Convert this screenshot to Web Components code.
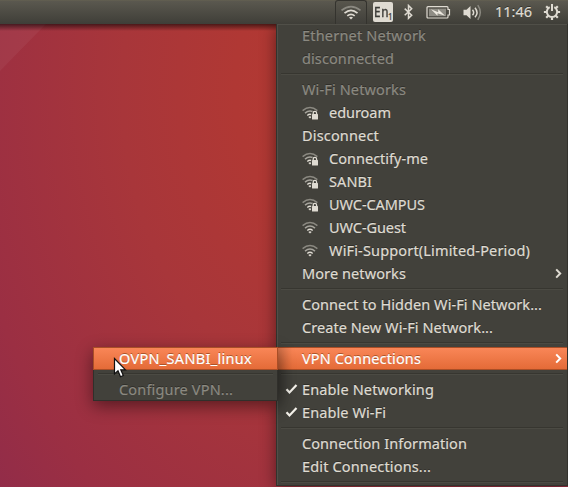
<!DOCTYPE html>
<html lang="en"><head><meta charset="utf-8"><title>Network menu</title>
<style>html,body{margin:0;height:100%;overflow:hidden}</style></head><body>
<desktop-screen></desktop-screen>
<script>
const make=(name,html,setup)=>customElements.define(name,class extends HTMLElement{
  connectedCallback(){
    if(this.shadowRoot)return;
    const t=document.createElement('template');t.innerHTML=html;
    this.attachShadow({mode:'open'}).append(t.content.cloneNode(true));
    if(setup)setup.call(this);
  }
});

/* Text label whose tracking is adjusted to reach a given advance width. */
make('fit-label',`<style>:host{display:inline-block;white-space:pre;-webkit-text-stroke:.2px currentColor}span{display:inline-block}</style><span><slot></slot></span>`,function(){
  const s=this.shadowRoot.querySelector('span'),w=+this.getAttribute('w');
  const n=this.textContent.length;
  s.style.letterSpacing=((w-s.getBoundingClientRect().width)/n)+'px';
});

const WIFI=`<path d="M.6 5.600Q8 -.8 15.400 5.600" stroke="#8b8981"/><path d="M3 8.100Q8 3.700 13 8.100" stroke="#a6a49c"/><path d="M5.300 10.400Q8 8 10.700 10.400" stroke="#dfdbd2"/><path d="M6.300 11.900Q8 10.800 9.700 11.900L8 13.600Z" fill="#dfdbd2" stroke="none"/>`;
make('wifi-icon',`<style>:host{display:block;width:16px;height:16px}svg{display:block}.lock{display:none}:host([secure]) .lock{display:block}</style>
<svg width="16" height="16" viewBox="0 0 16 16" fill="none" stroke-width="1.400">${WIFI}<g class="lock"><path d="M9.200 8.200h1V6.500h4.600v1.700H16V16H9.200z" fill="#42413b"/><path d="M11.200 9.500V8.100a1.700 1.700 0 0 1 3.400 0v1.400" stroke="#dfdbd2" stroke-width="1.300"/><rect x="10" y="9" width="6" height="5.500" rx=".5" fill="#dfdbd2"/></g></svg>`);

make('menu-separator',`<style>:host{display:block;height:8px;box-sizing:border-box;padding:3px 4px 0 4px}div{height:1px;background:#373630;border-bottom:1px solid #4b4a43}</style><div></div>`);

make('menu-item',`<style>
:host{display:flex;height:23px;box-sizing:border-box;align-items:center;padding:0 0 2px 25px;color:#dfdbd2;position:relative;font:14.5px/22px "Noto Sans","Open Sans",sans-serif;text-shadow:0 -1px 0 #302f2a}
:host([disabled]){color:#8b8981}
:host([active]){color:#fff;background:linear-gradient(#f98657,#e46b38);border:1px solid #a94e26;border-width:1px 0;text-shadow:0 -1px 0 #ad5328;line-height:21px;padding-bottom:0}
::slotted(wifi-icon){margin:2px 11px 0 0}
.check,.arrow{display:none;position:absolute}
.check{left:8px;top:6px}.arrow{right:5px;top:6px}
:host([checked]) .check,:host([submenu]) .arrow{display:block}
:host([active]) .arrow{top:5px}
</style>
<svg class="check" width="13" height="12" viewBox="0 0 13 12" fill="none" stroke="#f4f1ea" stroke-width="2.200"><path d="M1.500 5.200 4.500 8.500 11.500 1"/></svg>
<slot></slot>
<svg class="arrow" width="7" height="12" viewBox="0 0 7 12" fill="none" stroke="currentColor" stroke-width="2"><path d="m1.200 1.400 4 4.100-4 4.100"/></svg>`);

make('menu-panel',`<style>:host{display:block;box-sizing:border-box;background:#42413b}</style><slot></slot>`);

make('top-bar',`<style>
:host{display:flex;height:24px;box-sizing:border-box;padding-left:335px;background:linear-gradient(#666351 0,#5b584f 1px,#58564d 3px,#3f3e38);position:relative}
.net{width:32px;height:24px;box-sizing:border-box;border:1px solid #34332e;border-bottom:0;border-radius:3px 3px 0 0;background:linear-gradient(#58564d,#403f3a);padding:0}
.net svg{display:block;margin:2px 0 0 4px}
.lang{width:20px;height:20px;margin:2px 0 0 6px;border-radius:2px;background:#dfdbd2;color:#3c3b37;font:14px/20px "Noto Sans",sans-serif;box-sizing:border-box;padding-left:1px;display:flex}
.lang fit-label{width:14px;flex:none;transform:scaleX(.84);transform-origin:0 0;-webkit-text-stroke:.4px}
.lang b{font:8px/8px "Noto Sans",sans-serif;margin-top:11px;-webkit-text-stroke:.2px}
.i{display:block}
.bt{margin:4px 0 0 11px}.bat{margin:6px 0 0 13px}.vol{margin:4px 0 0 11px}
.time{margin:0 0 0 12px;width:37px;color:#dfdbd2;font:14.500px/23px "Noto Sans",sans-serif;text-shadow:0 -1px 0 #34332e}
.gear{margin:3px 0 0 11px}
</style>
<div class="net"><svg width="22" height="18" viewBox="0 0 22 18" fill="none" stroke-width="1.700"><path d="M1.500 7.300Q11 -.2 20.500 7.300" stroke="#8b8981"/><path d="M4.500 10.200Q11 4.600 17.500 10.200" stroke="#dfdbd2"/><path d="M7.300 12.800Q11 9.800 14.700 12.800" stroke="#dfdbd2"/><path d="M9 14.500Q11 13.100 13 14.500L11 16.500Z" fill="#dfdbd2"/></svg></div>
<div class="lang"><fit-label w="15.5">En</fit-label><b>1</b></div>
<svg class="i bt" width="9" height="16" viewBox="0 0 9 16" fill="none" stroke="#dfdbd2" stroke-width="1.500"><path d="M.7 4.600 7.700 11.200 4.500 14.300V1.500L7.700 4.700.7 11.300"/></svg>
<svg class="i bat" width="26" height="13" viewBox="0 0 26 13"><path d="M2 .7h19q1 0 1 1V3.500h1.500v5.500H22V11q0 1-1 1H2q-1 0-1-1V1.700q0-1 1-1z" fill="none" stroke="#dfdbd2" stroke-width="1.200"/><path d="M3 2.700h17v7.500H3z" fill="#8f8d85"/><path d="M5 3.200 12.200 6.200V3.300L19 9.800 11.500 7.300V9.800z" fill="#eeeae1"/></svg>
<svg class="i vol" width="20" height="17" viewBox="0 0 20 17" fill="none"><path d="M.5 5.700h3l4-3.700v13l-4-3.700h-3z" fill="#dfdbd2"/><path d="M9.500 5.700q2.300 2.800 0 5.600M12 3.700q4 4.800 0 9.600" stroke="#dfdbd2" stroke-width="1.500"/><path d="M14.800 1.200q5 7.300 0 14.600" stroke="#8b8981" stroke-width="1.500"/></svg>
<div class="time"><fit-label w="37">11:46</fit-label></div>
<svg class="i gear" width="18" height="18" viewBox="0 0 18 18" fill="none" stroke="#dfdbd2"><path d="M6.700 4.200a5.200 5.200 0 1 0 4.600 0" stroke-width="2"/><path d="M9 1v7" stroke-width="2"/><path d="M3.600 9H.9M14.400 9h2.700M9 14.400v2.700M5.200 5.200 3.200 3.200M12.800 5.200l2-2M5.200 12.800l-2 2M12.800 12.800l2 2" stroke-width="2.200"/></svg>`);

make('desktop-screen',`<style>
:host{display:block;width:568px;height:487px;position:relative;overflow:hidden;background:radial-gradient(ellipse 560px 790px at 335px 90px,#b43a32 0,#b03834 18%,#a8363a 38%,#9b2f43 66%,#8b2a4d 88%,#7f2850 100%)}
.glow{position:absolute;left:0;top:24px;width:46px;height:47px;background:#ffffff0c;clip-path:polygon(0 0,100% 0,0 100%)}
.shade{position:absolute;left:0;right:0;top:24px;height:7px;background:linear-gradient(#00000090,#00000050 45%,#0000)}
.main{position:relative;width:292px;height:462px;margin-left:276px;border:1px solid #33322d;border-width:0 1px 1px 1px;box-shadow:inset 1px 1px #504f48,0 2px 15px #0007}
.over{position:absolute;left:1px;top:323px;width:14px;height:68px;background:linear-gradient(90deg,#0002,#0000);-webkit-mask:linear-gradient(#000 60%,#0000);pointer-events:none}
.sub{position:absolute;left:93px;top:347px;width:185px;height:54px;border:1px solid #302f2b;border-top:0;box-shadow:0 5px 16px #0007}
.sub .act{margin:0 -1px;padding-left:26px;border:1px solid #a94e26}
.sub .act fit-label{margin-left:-1px}
.cursor{position:absolute;left:113px;top:357px}
top-bar{z-index:1}
</style>
<div class="glow"></div><top-bar></top-bar><div class="shade"></div>
<menu-panel class="main" id="main"></menu-panel>
<menu-panel class="sub"><menu-item active class="act"><fit-label w="133">OVPN_SANBI_linux</fit-label></menu-item><menu-separator></menu-separator><menu-item disabled><fit-label w="114">Configure VPN...</fit-label></menu-item></menu-panel>
<svg class="cursor" width="14" height="22" viewBox="0 0 14 22"><path d="M1.500 1.500V17L5 13.800 7.500 19.700 10.300 18.500 7.800 12.800H12.500Z" fill="#fff" stroke="#111" stroke-width="1.200"/></svg>`,function(){
  const rows=[
    ['Ethernet Network',124,'disabled'],['disconnected',92,'disabled'],0,
    ['Wi-Fi Networks',104,'disabled'],['eduroam',62,'','secure'],['Disconnect',77],['Connectify-me',99,'','secure'],
    ['SANBI',43,'','secure'],['UWC-CAMPUS',96,'','secure'],['UWC-Guest',77,'',' '],['WiFi-Support(Limited-Period)',201,'',' '],
    ['More networks',104,'submenu'],0,['Connect to Hidden Wi-Fi Network...',240],['Create New Wi-Fi Network...',191],0,
    ['VPN Connections',119,'active submenu'],0,['Enable Networking',132,'checked'],['Enable Wi-Fi',84,'checked'],0,
    ['Connection Information',165],['Edit Connections...',129],0];
  const m=this.shadowRoot.getElementById('main');
  m.innerHTML=rows.map(r=>r?`<menu-item ${r[2]||''}>${r[3]?`<wifi-icon ${r[3]}></wifi-icon>`:''}<fit-label w="${r[1]}">${r[0]}</fit-label></menu-item>`:'<menu-separator></menu-separator>').join('')+'<div class="over"></div>';
});
</script></body></html>
